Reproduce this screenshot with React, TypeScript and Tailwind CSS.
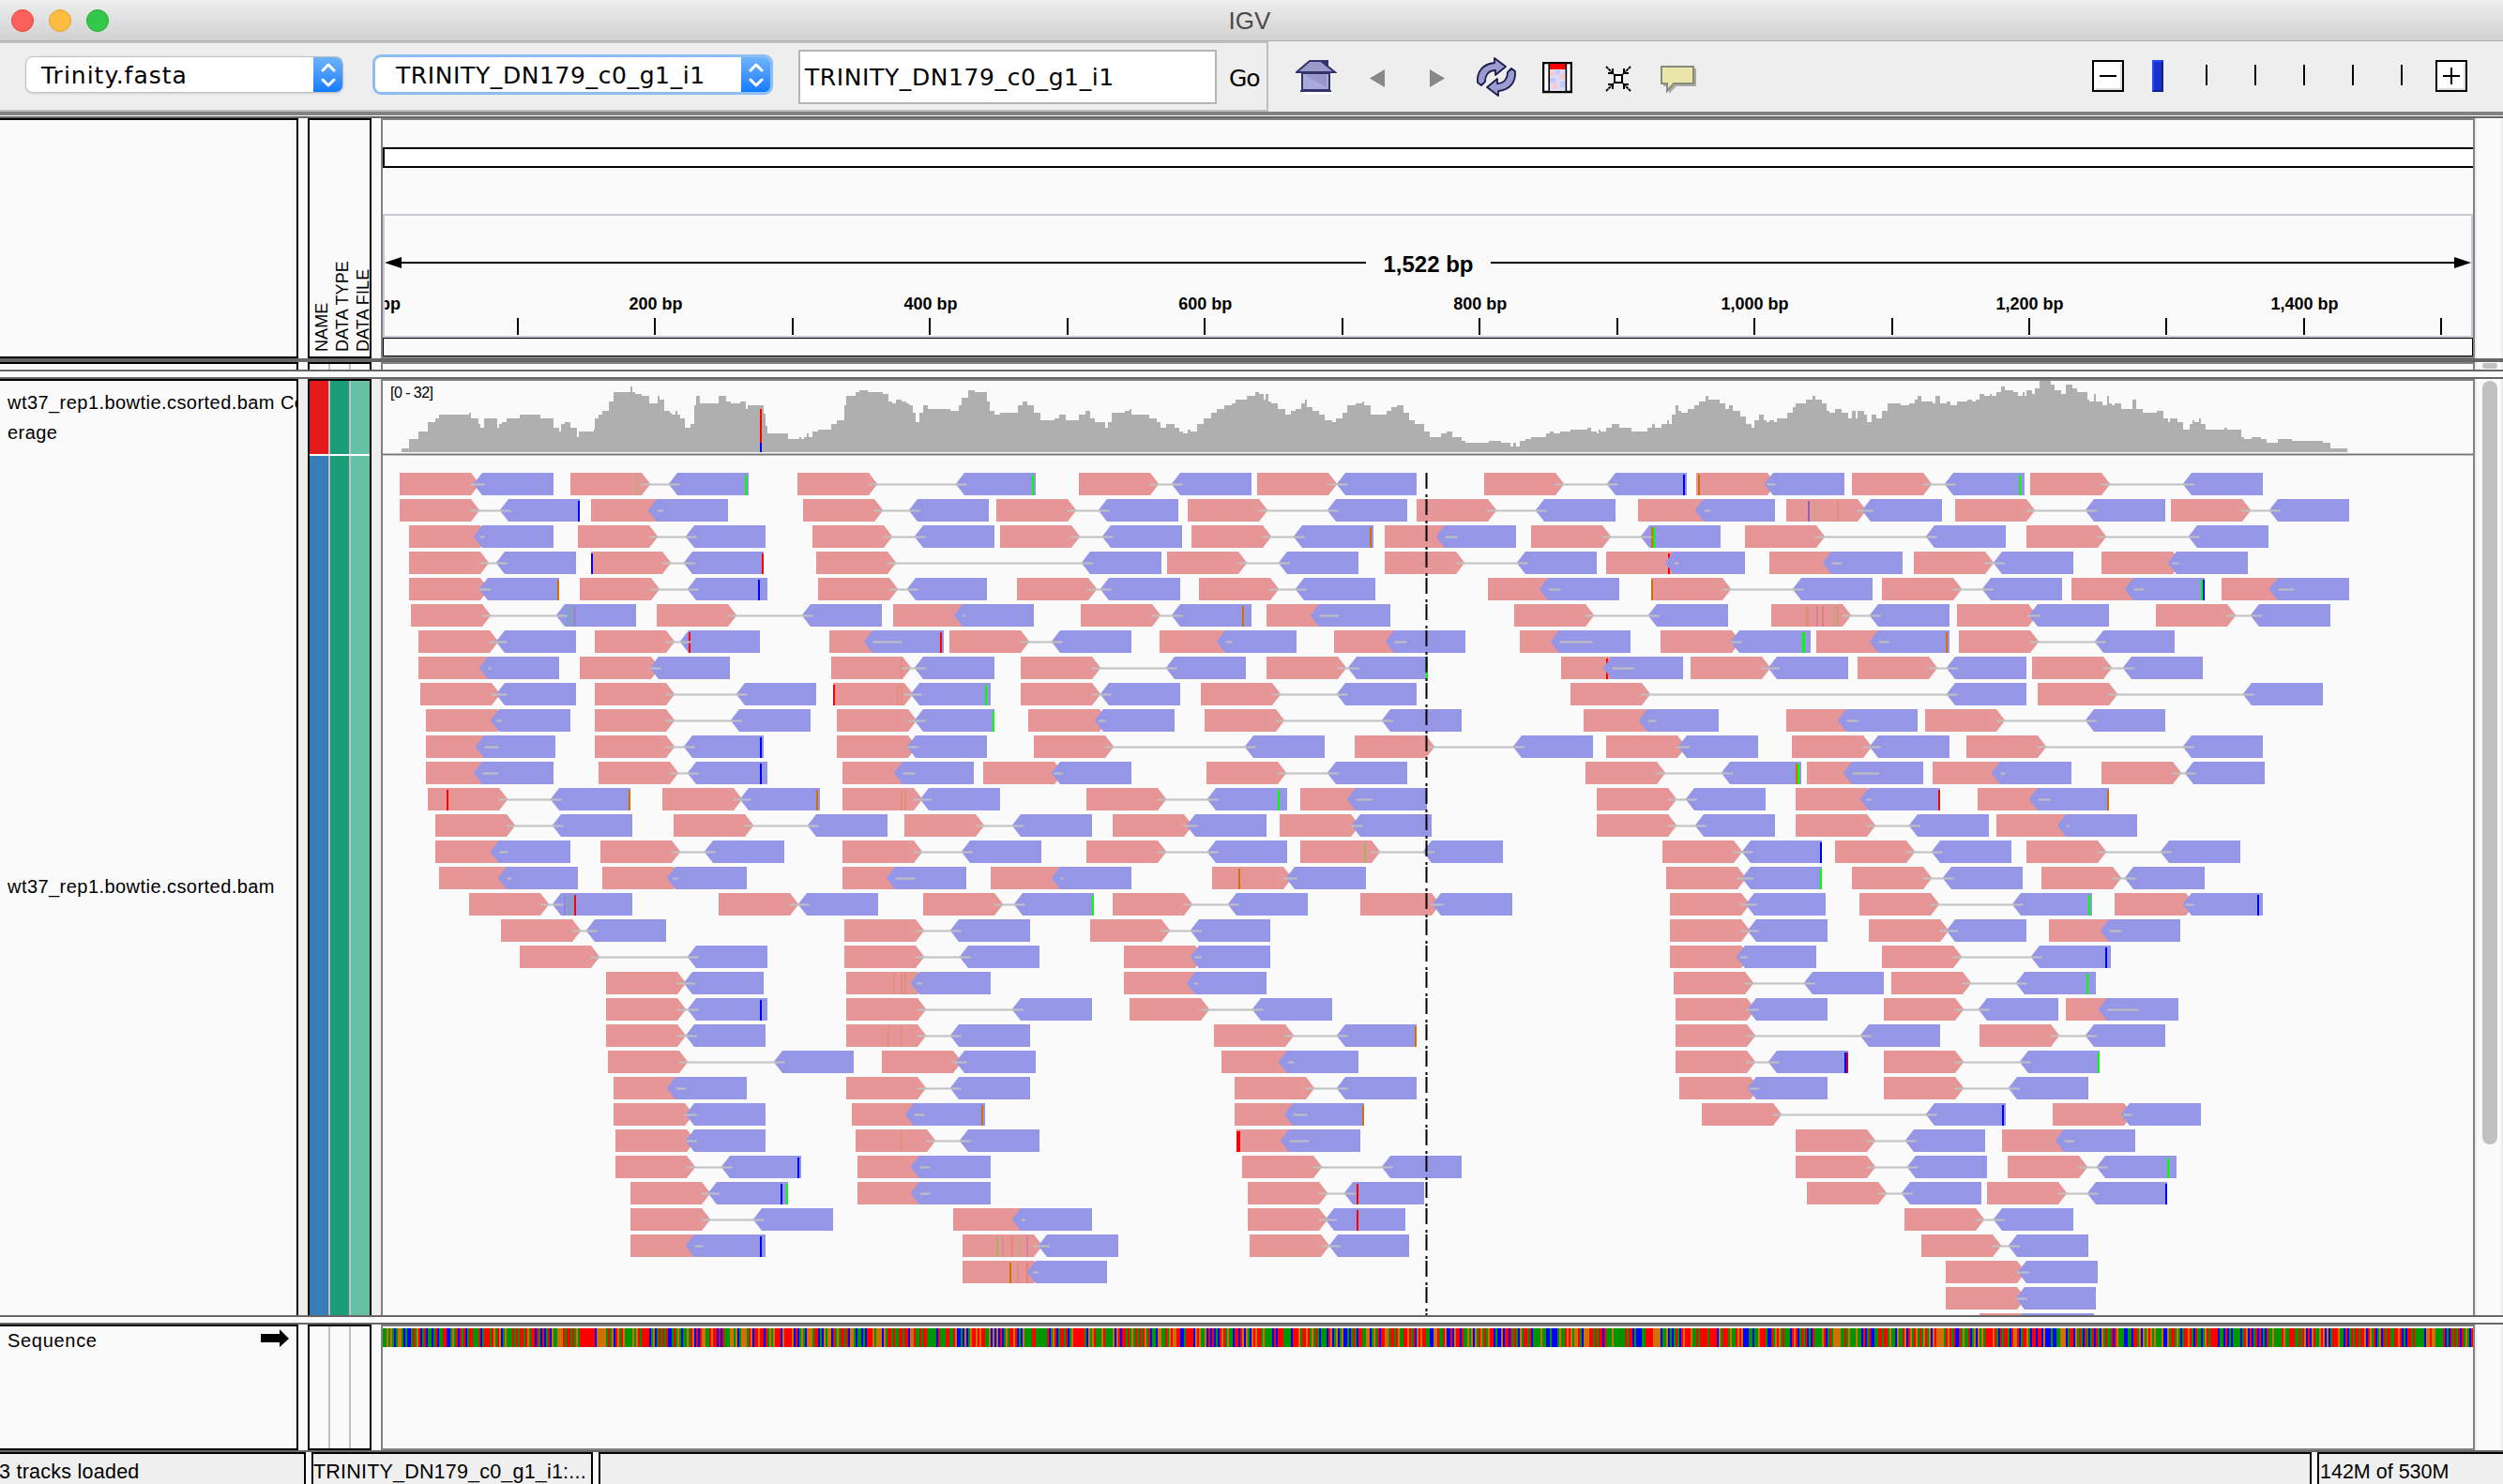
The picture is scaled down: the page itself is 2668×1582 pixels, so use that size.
import React from "react";

type Mark = [number, string, number?];
type Pair = [number, number, Mark[]?];
type Segment = { origin: number; scale: number; rows: Pair[][] };

const RED = "#ff0000";
const BLUE = "#0000ff";
const GREEN = "#00ff00";
const ORANGE = "#d17105";
const FAINT = "#e18d80";
const OLIVE = "#cda088";
const PURPLE = "#cb869b";
const TEAL = "#879dcb";
const LIME = "#a4b464";

const READ_LENGTH = 85.3;
const TIP = 9.3;
const PANEL_X = 408;

/* Paired reads, one inner array per packed row: [start, end, mismatches]. */
const segments: Segment[] = [
  {
    origin: 400,
    scale: 2.0632,
    rows: [
      [[54, 392], [429, 821, [[576, OLIVE], [815, GREEN]]], [928, 1452, [[1446, GREEN]]]],
      [[54, 450, [[448, BLUE]]], [475, 776], [941, 1349]],
      [[74, 392], [446, 858], [961, 1362]],
      [[74, 442], [475, 854, [[477, BLUE], [852, RED]]]],
      [[74, 404, [[402, ORANGE]]], [450, 862, [[844, BLUE]]], [974, 1345]],
      [[78, 574, [[425, TEAL, 6], [432, TEAL], [438, "#9587cd", 3]]], [619, 1114], [1139, 1448]],
      [[95, 442], [483, 846, [[691, RED]]], [999, 1250, [[1244, RED]]]],
      [[95, 404], [450, 780], [1003, 1362, [[1158, FAINT]]]],
      [[99, 442], [483, 970], [1007, 1353, [[1009, RED], [1149, FAINT], [1157, FAINT], [1343, GREEN]]]],
      [[111, 429], [483, 957], [1015, 1362, [[1360, GREEN]]]],
      [[111, 396], [483, 854, [[848, BLUE]]], [1015, 1345]],
      [[111, 392], [491, 862, [[848, BLUE]]], [1027, 1316]],
      [[116, 561, [[159, RED], [559, ORANGE]]], [631, 978, [[972, ORANGE]]], [1027, 1374, [[1157, FAINT], [1166, FAINT]]]],
      [[132, 565], [656, 1126]],
      [[132, 429], [495, 900], [1027, 1465]],
      [[140, 446], [499, 817], [1027, 1300]],
      [[206, 565, [[416, "#9587cd"], [424, TEAL], [431, TEAL, 5], [439, RED]]], [755, 1106]],
      [[276, 640], [1032, 1440]],
      [[318, 862], [1032, 1461]],
      [[508, 854], [1036, 1353, [[1141, FAINT], [1157, FAINT], [1166, FAINT], [1187, OLIVE]]]],
      [[508, 862, [[848, BLUE]]]],
      [[508, 858], [1036, 1440, [[1129, FAINT], [1157, FAINT]]]],
      [[512, 1052], [1114, 1452]],
      [[524, 817], [1036, 1440]],
      [[524, 858], [1048, 1341, [[1335, ORANGE]]]],
      [[528, 858], [1056, 1461, [[1157, FAINT]]]],
      [[528, 937, [[930, BLUE]]], [1060, 1353]],
      [[561, 908, [[893, BLUE], [906, GREEN]]], [1060, 1353]],
      [[561, 1007]],
      [[561, 858, [[848, BLUE]]]],
    ],
  },
  {
    origin: 1130,
    scale: 2.0632,
    rows: [
      [[41, 421], [433, 784], [933, 1378, [[1371, BLUE]]]],
      [[-140, 260], [281, 763], [784, 1221]],
      [[-132, 268], [289, 689, [[683, ORANGE]]], [714, 1003], [1036, 1452, [[1301, ORANGE], [1305, GREEN]]]],
      [[-536, 223], [235, 656], [714, 1180], [1201, 1506, [[1339, RED]]]],
      [[-95, 264], [305, 693], [941, 1230]],
      [[45, 421, [[402, ORANGE]]], [454, 726], [999, 1469]],
      [[-243, 157], [219, 520], [602, 891], [1011, 1254]],
      [[-87, 409], [454, 808, [[807, GREEN]]], [1102, 1370, [[1203, RED]]]],
      [[-87, 264], [309, 784]],
      [[-70, 252], [318, 883], [1151, 1448]],
      [[-58, 582], [648, 1172], [1201, 1535]],
      [[-169, 157], [322, 763]],
      [[58, 499, [[481, GREEN]]], [528, 806], [1180, 1551]],
      [[-342, 70], [116, 454], [483, 817]],
      [[58, 499], [528, 974, [[671, LIME]]]],
      [[-153, 157], [334, 673, [[394, ORANGE]]]],
      [[-301, 74, [[72, GREEN]]], [116, 545], [660, 994]],
      [[66, 462]],
      [[140, 462]],
      [[140, 454]],
      [[-470, 70], [153, 598]],
      [[338, 784, [[782, ORANGE]]]],
      [[355, 656]],
      [[384, 784]],
      [[384, 668, [[666, ORANGE]]]],
      [[388, 660, [[392, RED, 4]]]],
      [[400, 883]],
      [[413, 801, [[654, RED]]]],
      [[-235, 70], [413, 759, [[654, RED]]]],
      [[-214, 128, [[-138, LIME], [-126, FAINT], [-107, FAINT, 3], [-90, OLIVE, 3], [-72, PURPLE]]], [417, 767]],
      [[-214, 103, [[-109, ORANGE], [-93, FAINT], [-72, "#e18080"]]]],
    ],
  },
  {
    origin: 1820,
    scale: 2.24,
    rows: [
      [[-26.7, 327, [[-20, ORANGE]]], [345, 757, [[745, GREEN]]], [771, 1326]],
      [[-165.7, 161], [188, 560, [[243, "#8862be"], [257, OLIVE], [311, FAINT]]], [591, 1093], [1107, 1532]],
      [[90, 712], [762, 1340]],
      [[148, 466], [493, 874], [941, 1290]],
      [[-134, 394, [[-132, ORANGE]]], [417, 847], [869, 1187, [[1180, GREEN], [1185, BLUE]]], [1228, 1532]],
      [[152, 578, [[238, FAINT, 4], [262, PURPLE], [275, "#e18080"], [303, OLIVE, 3], [311, FAINT]]], [596, 959], [1071, 1487]],
      [[-112.5, 246, [[230, GREEN, 3]]], [260, 578, [[572, ORANGE]]], [600, 1116]],
      [[-41, 336], [358, 762], [775, 1183]],
      [[-327.5, 762], [788, 1469]],
      [[188, 502], [520, 1093]],
      [[202, 578], [618, 1326]],
      [[-291.6, 224, [[213, ORANGE], [217, GREEN]]], [237, 515], [538, 869], [941, 1331]],
      [[211, 555, [[553, RED]]], [645, 959, [[956, ORANGE]]]],
      [[-264.5, 161], [211, 672], [690, 1026]],
      [[-107, 273, [[271, BLUE]]], [305, 726], [762, 1272]],
      [[-98, 273, [[271, GREEN]]], [345, 753], [797, 1187]],
      [[-90, 282], [363, 918, [[912, GREEN]]], [972, 1326, [[1315, BLUE]]]],
      [[-90, 287], [385, 762], [815, 1129]],
      [[-90, 260], [417, 963, [[952, BLUE]]]],
      [[-81, 421], [439, 927, [[907, GREEN]]]],
      [[-76.6, 287], [421, 838], [856, 1124]],
      [[-76.6, 556], [650, 1093]],
      [[-76.6, 336, [[330, BLUE], [334, "#d00020"]]], [421, 936, [[934, GREEN]]]],
      [[-67, 287], [421, 909]],
      [[-13.7, 712, [[705, BLUE]]], [824, 1178]],
      [[211, 663], [703, 1021]],
      [[211, 668], [717, 1120, [[1100, GREEN]]]],
      [[237, 654], [668, 1098, [[1095, BLUE]]]],
      [[470, 874]],
      [[511, 909]],
      [[569, 932]],
      [[569, 927]],
      [[650, 923]],
    ],
  },
];

/* Coverage profile as hand-traced "position:top" steps; not computed from the reads above. */
const coverageLeft =
  "883:714,900:684,920:660,941:630,957:618,966:606,1032:600,1036:618,1052:636,1057:648,1065:618,1093:648,1098:636,1104:630,1114:618,1143:606,1188:618,1217:648,1230:660,1234:636,1242:630,1254:648,1268:678,1272:660,1305:654,1309:618,1316:606,1325:594,1338:564,1350:534,1386:516,1391:534,1396:540,1412:546,1428:570,1447:546,1451:558,1461:594,1474:600,1478:606,1485:594,1490:606,1495:618,1507:648,1518:636,1527:576,1531:546,1539:570";
const coverageRight =
  "52:96,57:72,64:90,68:96,77:90,82:114,84:102,98:130,100:168,102:192,121:210,131:204,133:210,135:204,138:192,140:204,143:186,148:180,160:162,165:150,172:102,174:72,183:60,186:54,194:60,208:66,213:90,216:96,220:84,225:90,229:96,232:102,235:126,238:156,241:126,245:102,249:114,270:120,277:102,280:78,286:54,292:60,303:90,306:120,310:132,315:126,332:102,336:90,340:102,346:126,352:150,365:144,370:132,376:150,388:132,394:120,398:144,402:156,412:174,414:156,418:126,430:120,434:114,436:132,452:144,459:156,463:174,468:162,476:174,480:186,483:192,488:180,490:186,496:162,502:144,509:126,514:114,521:102,528:96,532:84,542:72,550:60,553:66,557:84,559:66,562:90,564:96,570:114,577:132,582:120,587:114,592:96,595:84,597:108,602:120,608:132,613:150,620:156,624:144,630:126,634:102,642:96,648:90,650:102,656:132,670:120,675:108,680:102,686:126,691:150,696:162,705:186,710:204,720:192,725:186,731:204,739:216,743:222,764:216,775:222,784:234,787:222,789:234,793:216,798:210,803:204,817:192,820:186,824:192,830:186,839:180,855:174,858:186,863:192,865:180,867:186,872:174,877:162,884:174,895:186,910:174,914:162,917:174,923:162,928:150,930:162,932:132,936:102,938:120,941:126,947:114,953:102,957:90,963:72,966:84,976:96,981:114,985:102,988:120,995:138,1000:162,1005:174,1008:150,1012:132,1017:150,1019:156,1022:150,1026:156,1029:144,1038:126,1043:108,1046:96,1055:84,1061:72,1064:84,1070:96,1074:120,1077:126,1082:114,1088:126,1094:144,1098:120,1101:144,1103:120,1109:132,1111:156,1116:132,1120:144,1125:120,1130:96,1142:102,1150:96,1155:84,1158:72,1161:90,1172:96,1174:72,1179:96,1185:90,1188:102,1194:90,1204:84,1208:90,1211:84,1215:66,1219:72,1224:66,1226:72,1230:60,1235:42,1238:54,1246:60,1250:72,1254:60,1256:72,1258:54,1263:66,1266:48,1270:24,1280:36,1284:54,1290:66,1294:36,1300:48,1304:60,1314:84,1316:90,1320:66,1322:90,1328:102,1332:72,1334:96,1336:102,1339:96,1345:114,1355:84,1359:114,1365:126,1378:120,1384:144,1388:156,1390:144,1397:156,1402:180,1408:162,1410:150,1412:156,1416:144,1418:162,1422:180,1440:174,1442:180,1455:204,1458:210,1465:204,1473:210,1478:222,1489:210,1502:216,1530:222,1537:240";

function coveragePath() {
  const points: [number, number][] = [];
  for (const p of coverageLeft.split(",")) {
    const [x, y] = p.split(":").map(Number);
    points.push([x / 2.0632 - PANEL_X, 240 + y / 3 - 406]);
  }
  for (const p of coverageRight.split(",")) {
    const [x, y] = p.split(":").map(Number);
    points.push([700 + x * 1.1607 - PANEL_X, 398 + y / 3 - 406]);
  }
  let d = `M${Math.round(points[0][0])} 76`;
  for (const [x, y] of points) d += `H${Math.round(x)}V${Math.max(0, Math.round(y))}`;
  return d + "H2094V76Z";
}

const seqHead =
  "GGOGOGBGOOGBGBBGRGORBGRBGGBGRBGGRRBBGOGRBRGRBGRRGGGRBGRRRGROGROBGOGGGRGRGRRGROGRRBRGBRBGRBOGGOOORGRRGRGOGRRRRRRRRBOOOOOGRGOBROGROGGGGOGORGRRRRBGOBG";
const seqTail =
  "BBOGRRGOGBGRRORGBRGGBGORGRRRRBGGBRBGBGGGGBGROBRBGRBRBGBRGGOGGGGROGGRRRGGRGROBRBORGGOROBOBGRRROGGBRBGRGRRGRROBROGRBGOBRGRRGGRRORBGBRRGRGGGGGBOOROOGGGGRBGBRGRGRBRGOGBR";

/*
 * Colour cells for the sequence strip, one letter per two-pixel cell.
 * The head and tail are approximate transcriptions; everything between them is
 * pseudo-random placeholder data, not a real base sequence.
 */
function buildPlaceholderSequence() {
  const cells = 1114;
  let seed = 1797;
  const next = () => {
    seed = (seed * 1103515245 + 12345) % 2147483648;
    return seed / 2147483648;
  };
  let s = seqHead;
  while (s.length < cells - seqTail.length) {
    const r = next();
    s += r < 0.33 ? "G" : r < 0.61 ? "R" : r < 0.79 ? "B" : "O";
  }
  return s + seqTail;
}
const sequence = buildPlaceholderSequence();
const baseColor: Record<string, string> = { G: "#009600", R: "#ff0000", B: "#0000ff", O: "#d17105" };

function Alignments() {
  const out: React.ReactNode[] = [];
  segments.forEach((seg, si) =>
    seg.rows.forEach((row, ri) =>
      row.forEach(([a, b, marks], pi) => {
        const toX = (v: number) => seg.origin - PANEL_X + v / seg.scale;
        const y = ri * 28 + 18;
        const l = Math.round(toX(a));
        const r = Math.round(toX(b));
        const le = l + READ_LENGTH;
        const rs = r - READ_LENGTH;
        const mid = y + 12;
        const lineA = Math.min(le - 9, rs + 11) - 1;
        const lineB = Math.max(le - 9, rs + 11) + 1;
        const draw = (m: Mark, i: number) => (
          <rect key={i} x={Math.round(toX(m[0]) - (m[2] ?? 2) / 2)} y={y + 2} width={m[2] ?? 2} height={22} fill={m[1]} />
        );
        const under = (marks ?? []).filter((m) => toX(m[0]) < rs + 6);
        const over = (marks ?? []).filter((m) => toX(m[0]) >= rs + 6);
        out.push(
          <g key={`${si}-${ri}-${pi}`}>
            <path d={`M${l} ${y}H${le - TIP}L${le} ${mid}L${le - TIP} ${y + 24}H${l}Z`} fill="#e69696" />
            {under.map(draw)}
            <path d={`M${r} ${y}H${rs + TIP}L${rs} ${mid}L${rs + TIP} ${y + 24}H${r}Z`} fill="#9696e6" />
            {over.map(draw)}
            <rect x={lineA} y={y + 11} width={lineB - lineA} height={3} fill="#c0c0c0" fillOpacity={0.5} />
            <rect x={lineA} y={y + 12} width={lineB - lineA} height={1} fill="#c0c0c0" />
          </g>
        );
      })
    )
  );
  return (
    <svg className="block" width={2228} height={916} viewBox="0 0 2228 916">
      {out}
      <path d="M1112.500 18V916" stroke="#000" strokeWidth={2} strokeDasharray="17 6 3 2" />
    </svg>
  );
}

function ComboArrows() {
  return (
    <svg width={16} height={28} viewBox="0 0 16 28" fill="none" stroke="#fff" strokeWidth={3} strokeLinecap="round" strokeLinejoin="round">
      <path d="M2 9L8 3L14 9M2 19L8 25L14 19" />
    </svg>
  );
}

function HomeIcon() {
  return (
    <svg width={44} height={38} viewBox="0 0 44 38">
      <path d="M8 36H40" stroke="#fff" strokeWidth={3} />
      <path d="M28 1H35V11H28Z" fill="#33336b" />
      <path d="M15 2H27L42 14H1Z" fill="#9a9acb" stroke="#33336b" strokeWidth={2} />
      <path d="M7 15H36V33H7Z" fill="#a9a9db" stroke="#33336b" strokeWidth={2} />
      <path d="M10 17L33 30V16H22Z" fill="#8585bb" opacity={0.5} />
      <path d="M5 34H38" stroke="#33336b" strokeWidth={2} />
    </svg>
  );
}

function RefreshIcon() {
  return (
    <svg width={44} height={42} viewBox="0 0 44 42" stroke="#1c1c4c" strokeWidth={1.8} strokeLinejoin="round">
      <path d="M2 27C1 15 8 7 20 6V1L32 10L21 19V14C13 14 10 20 10 26L6 30Z" fill="#9a9bd0" />
      <path d="M42 15C43 27 36 35 24 36V41L12 32L23 23V28C31 28 34 22 34 16L38 12Z" fill="#9a9bd0" />
    </svg>
  );
}

function RegionIcon() {
  return (
    <svg width={32} height={34} viewBox="0 0 32 34">
      <rect x={1} y={1} width={30} height={31} fill="#fff" stroke="#000" strokeWidth={2.5} />
      <rect x={7} y={2} width={18} height={29} fill="#dcdcfa" />
      <path d="M8 10H13V15H8ZM18 13H24V18H18ZM11 23H16V29H11Z" fill="#f8c8c8" />
      <path d="M14 9H19V13H14ZM8 17H14V22H8ZM19 21H24V27H19Z" fill="#c4c8fb" />
      <rect x={8} y={2} width={17} height={6} fill="#f00" />
      <path d="M7.2 1V32M25.4 1V32" stroke="#000" strokeWidth={1.6} />
    </svg>
  );
}

function FitIcon() {
  return (
    <svg width={28} height={28} viewBox="0 0 28 28" fill="none" stroke="#000" strokeWidth={2}>
      <rect x={10} y={10} width={8} height={8} fill="#fff" />
      <path d="M1 1L9 9M27 1L19 9M1 27L9 19M27 27L19 19" strokeDasharray="3 0.6" />
      <path d="M3 8H8V3M25 8H20V3M3 20H8V25M25 20H20V25" />
    </svg>
  );
}

function BubbleIcon() {
  return (
    <svg width={40} height={32} viewBox="0 0 40 32">
      <path d="M4 4H39V23H18L10 31V23H4Z" fill="#aaa" />
      <path d="M2 2H36V20H15L8 28V20H2Z" fill="#ebe7aa" stroke="#8a8a7c" strokeWidth={2} />
    </svg>
  );
}

function Toolbar() {
  return (
    <div className="flex h-[75px] bg-[#eeeeee]">
      <div className="flex h-[75px] w-[1352px] items-start border-t-2 border-r-2 border-b-2 border-[#bfbfbf] pl-[27px] text-[25px] font-['DejaVu_Sans',sans-serif] text-black">
        <div className="mt-[14px] flex h-[39px] w-[339px] items-center overflow-hidden rounded-[8px] border border-[#c0c0c0] bg-white shadow-sm">
          <span className="w-[306px] pt-[2px] pl-4 leading-[30px] tracking-[1px]">Trinity.fasta</span>
          <span className="flex h-full flex-1 items-center justify-center bg-gradient-to-b from-[#6db3fb] to-[#0a7bff]">
            <ComboArrows />
          </span>
        </div>
        <div className="mt-[12px] ml-[31px] flex h-[43px] w-[427px] items-center overflow-hidden rounded-[9px] border-[3px] border-[#8dbdf2] bg-white">
          <span className="w-[390px] pt-[2px] pl-[22px] leading-[30px] tracking-[0.6px] whitespace-nowrap">TRINITY_DN179_c0_g1_i1</span>
          <span className="flex h-full flex-1 items-center justify-center bg-gradient-to-b from-[#6db3fb] to-[#0a7bff]">
            <ComboArrows />
          </span>
        </div>
        <div className="mt-[7px] ml-[27px] flex h-[58px] w-[446px] items-center border-2 border-[#b4b4b4] bg-white pt-px pl-[5px] leading-none tracking-[0.6px]">
          TRINITY_DN179_c0_g1_i1
        </div>
        <span className="mt-[25px] ml-[13px] leading-none tracking-[-1px]">Go</span>
      </div>
      <div className="flex flex-1 items-start">
        <div className="mt-[19px] ml-[29px]"><HomeIcon /></div>
        <svg className="mt-[30px] ml-[35px]" width={16} height={19} viewBox="0 0 16 19"><path d="M0 9.500L16 0V19Z" fill="#878787" /></svg>
        <svg className="mt-[30px] ml-[48px]" width={16} height={19} viewBox="0 0 16 19"><path d="M16 9.500L0 0V19Z" fill="#878787" /></svg>
        <div className="mt-[17px] ml-[33px]"><RefreshIcon /></div>
        <div className="mt-[22px] ml-[27px]"><RegionIcon /></div>
        <div className="mt-[26px] ml-[35px]"><FitIcon /></div>
        <div className="mt-[25px] ml-[30px]"><BubbleIcon /></div>
        <div className="mt-[20px] ml-auto mr-[38px] flex items-start">
          <ZoomButton plus={false} />
          <div className="ml-[30px] h-[34px] w-[12px] border-t-2 border-r-2 border-b-2 border-l-2 border-t-[#2448ff] border-r-[#12208f] border-b-[#12208f] border-l-[#2448ff] bg-[#1a30c8]" />
          <div className="mt-[5px] ml-[45px] flex gap-[50px]">
            {[0, 1, 2, 3, 4].map((i) => (
              <div key={i} className="h-[22px] w-[2px] bg-black" />
            ))}
          </div>
          <div className="ml-[35px]"><ZoomButton plus /></div>
        </div>
      </div>
    </div>
  );
}

function ZoomButton({ plus }: { plus: boolean }) {
  return (
    <svg width={34} height={34} viewBox="0 0 34 34">
      <rect x={1} y={1} width={32} height={32} fill="#fff" stroke="#000" strokeWidth={2} />
      <path d="M4 31H31V4" fill="none" stroke="#dcdcdc" strokeWidth={2} />
      <path d="M8 17H26" stroke="#000" strokeWidth={2} />
      {plus && <path d="M17 8V26" stroke="#000" strokeWidth={2} />}
    </svg>
  );
}

function Divider() {
  return (
    <div className="h-[10px] border-t-2 border-b-2 border-[#666666] bg-[#fafafa]" />
  );
}

function Ruler() {
  const ticks = Array.from({ length: 15 }, (_, i) => 144 + i * 146.45);
  return (
    <div className="flex h-full flex-col">
      <div className="mt-[29px] h-[22px] border-t-2 border-b-2 border-l-2 border-black bg-white" />
      <div className="mt-[49px] flex h-[132px] flex-col overflow-hidden border-2 border-[#c8c8d6]">
        <div className="mt-[30px] flex h-[40px] items-center">
          <svg width={18} height={14} viewBox="0 0 18 14"><path d="M0 7L18 1V13Z" /></svg>
          <div className="h-[2px] w-[1028px] bg-black" />
          <div className="w-[133px] pt-1 text-center text-[24px] font-bold">1,522 bp</div>
          <div className="h-[2px] flex-1 bg-black" />
          <svg width={18} height={14} viewBox="0 0 18 14"><path d="M18 7L0 1V13Z" /></svg>
        </div>
        <svg className="mt-[2px] -ml-[2px] block w-[2228px]" width={2228} height={56} viewBox="0 0 2228 56">
          {ticks.map((x, i) => (
            <rect key={i} x={Math.round(x) - 1} y={37} width={2} height={18} />
          ))}
          <text x={19} y={28} textAnchor="end" fontSize={18} fontWeight={700}>1 bp</text>
          {["200", "400", "600", "800", "1,000", "1,200", "1,400"].map((t, i) => (
            <text key={t} x={291 + i * 292.900} y={28} textAnchor="middle" fontSize={18} fontWeight={700}>{t} bp</text>
          ))}
        </svg>
      </div>
      <div className="h-[20px] border border-black" />
    </div>
  );
}

function ScrollGutter({ children }: { children?: React.ReactNode }) {
  return (
    <div className="w-[30px] border-r-2 border-l-2 border-[#ebebeb] bg-[#fafafa] pl-[6px]">{children}</div>
  );
}

function AttributeColumns({ top }: { top?: boolean }) {
  return (
    <div className="flex h-full gap-[2px] bg-[#c0c0c0]">
      {top ? <div className="w-5 bg-[#e41a1c]" /> : <div className="w-5 bg-[#377eb8]" />}
      <div className="w-5 bg-[#1b9e77]" />
      <div className="flex-1 bg-[#66c2a5]" />
    </div>
  );
}

function EmptyColumns() {
  return (
    <div className="flex h-full gap-[2px] bg-[#c0c0c0]">
      <div className="w-5 bg-[#fafafa]" />
      <div className="w-5 bg-[#fafafa]" />
      <div className="flex-1 bg-[#fafafa]" />
    </div>
  );
}

export default function App() {
  return (
    <div className="flex h-[1582px] w-[2668px] flex-col overflow-hidden bg-[#fafafa] font-['Liberation_Sans',Arial,sans-serif] text-black">
      <div className="flex h-[44px] items-center border-b border-[#b0b0b0] bg-gradient-to-b from-[#eeeeee] to-[#d1d1d1]">
        <div className="flex w-[300px] gap-4 pl-3">
          <div className="size-6 rounded-full border border-[#e2463f] bg-[#fc605b]" />
          <div className="size-6 rounded-full border border-[#dfa032] bg-[#fdbc40]" />
          <div className="size-6 rounded-full border border-[#26a934] bg-[#34c84a]" />
        </div>
        <div className="flex-1 pt-[2px] text-center text-[26px] text-[#4a4a4a] font-['Liberation_Sans',sans-serif]">IGV</div>
        <div className="w-[304px]" />
      </div>
      <Toolbar />
      <div className="h-[5px] border-b border-[#fafafa] bg-[#828282]" />
      <div className="h-[2px] bg-[#666666]" />

      <div className="flex h-[256px]">
        <div className="w-[318px] border-t-2 border-r-2 border-b-2 border-black" />
        <div className="ml-[10px] flex w-[68px] overflow-hidden border-2 border-black pl-[2px] text-[18px] tracking-[0.1px]">
          <div className="flex w-[22px] shrink-0 rotate-180 justify-start pt-[5px] leading-[22px] whitespace-nowrap [writing-mode:vertical-rl]">NAME</div>
          <div className="flex w-[22px] shrink-0 rotate-180 justify-start pt-[5px] leading-[22px] whitespace-nowrap [writing-mode:vertical-rl]">DATA TYPE</div>
          <div className="flex w-[22px] shrink-0 rotate-180 justify-start pt-[5px] leading-[22px] whitespace-nowrap [writing-mode:vertical-rl]">DATA FILE</div>
        </div>
        <div className="ml-[10px] w-[2232px] border-2 border-[#828282]"><Ruler /></div>
        <ScrollGutter />
      </div>
      <div className="h-1 bg-[#666666]" />

      <div className="flex h-[8px]">
        <div className="w-[318px] border-t-2 border-r-2 border-black" />
        <div className="ml-[10px] w-[68px] border-x-2 border-t-2 border-black"><EmptyColumns /></div>
        <div className="ml-[10px] w-[2232px] border-x-2 border-t-2 border-[#828282]" />
        <ScrollGutter><div className="mt-px h-[6px] w-4 rounded-full bg-[#c1c1c1]" /></ScrollGutter>
      </div>
      <Divider />

      <div className="flex h-[998px] overflow-hidden bg-[#eeeeee]">
        <div className="flex w-[318px] flex-col overflow-hidden border-t-2 border-r-2 border-black bg-[#fafafa] pl-2 text-[20px] tracking-[0.45px] whitespace-nowrap">
          <div className="h-[80px] pt-[7px] leading-8">wt37_rep1.bowtie.csorted.bam Cov<br />erage</div>
          <div className="mt-[443px] leading-8">wt37_rep1.bowtie.csorted.bam</div>
        </div>
        <div className="ml-[10px] flex w-[68px] flex-col border-x-2 border-t-2 border-black">
          <div className="h-[78px]"><AttributeColumns top /></div>
          <div className="h-[2px] bg-white" />
          <div className="min-h-0 flex-1"><AttributeColumns /></div>
        </div>
        <div className="ml-[10px] w-[2232px] border-x-2 border-t-2 border-[#828282] bg-[#fafafa]">
          <svg className="block" width={2228} height={77} viewBox="0 0 2228 77">
            <path d={coveragePath()} fill="#afafaf" shapeRendering="crispEdges" />
            <rect x={402} y={30} width={2} height={36} fill="#f00" />
            <rect x={402} y={66} width={2} height={10} fill="#00f" />
            <text x={8} y={18} fontSize={16} textLength={46}>[0 - 32]</text>
          </svg>
          <div className="h-[3px] border-y border-[#bdbdbd] bg-[#777777]" />
          <Alignments />
        </div>
        <ScrollGutter><div className="mt-[2px] h-[814px] w-4 rounded-full bg-[#c1c1c1]" /></ScrollGutter>
      </div>
      <Divider />

      <div className="flex h-[134px]">
        <div className="flex w-[318px] items-start justify-between border-y-2 border-r-2 border-black pr-2 pl-2 text-[20px]">
          <span className="leading-[31px] tracking-[0.7px]">Sequence</span>
          <svg className="mt-[3px]" width={30} height={20} viewBox="0 0 30 20"><path d="M0 5H20V0L30 10L20 19V14H0Z" /></svg>
        </div>
        <div className="ml-[10px] w-[68px] border-2 border-black"><EmptyColumns /></div>
        <div className="ml-[10px] w-[2232px] border-2 border-[#828282] pt-[2px]">
          <svg className="block" width={2228} height={20} viewBox="0 0 2228 20" shapeRendering="crispEdges">
            {sequence.split("").map((c, i) => (
              <rect key={i} x={i * 2} y={0} width={2} height={20} fill={baseColor[c]} />
            ))}
          </svg>
        </div>
        <ScrollGutter />
      </div>
      <div className="h-[2px] bg-[#666666]" />

      <div className="flex h-[34px] gap-[6px] text-[21.500px] leading-[38px] whitespace-nowrap">
        <div className="w-[326px] border-t-2 border-r-2 border-black bg-[#efefef] tracking-[0.25px]">
          <span className="-ml-px">3 tracks loaded</span>
        </div>
        <div className="w-[300px] border-x-2 border-t-2 border-black bg-[#efefef] tracking-[0.2px]">TRINITY_DN179_c0_g1_i1:...</div>
        <div className="w-[1826px] border-x-2 border-t-2 border-black bg-[#efefef]" />
        <div className="flex-1 border-t-2 border-l-2 border-black bg-[#efefef] pl-px">142M of 530M</div>
      </div>
    </div>
  );
}
